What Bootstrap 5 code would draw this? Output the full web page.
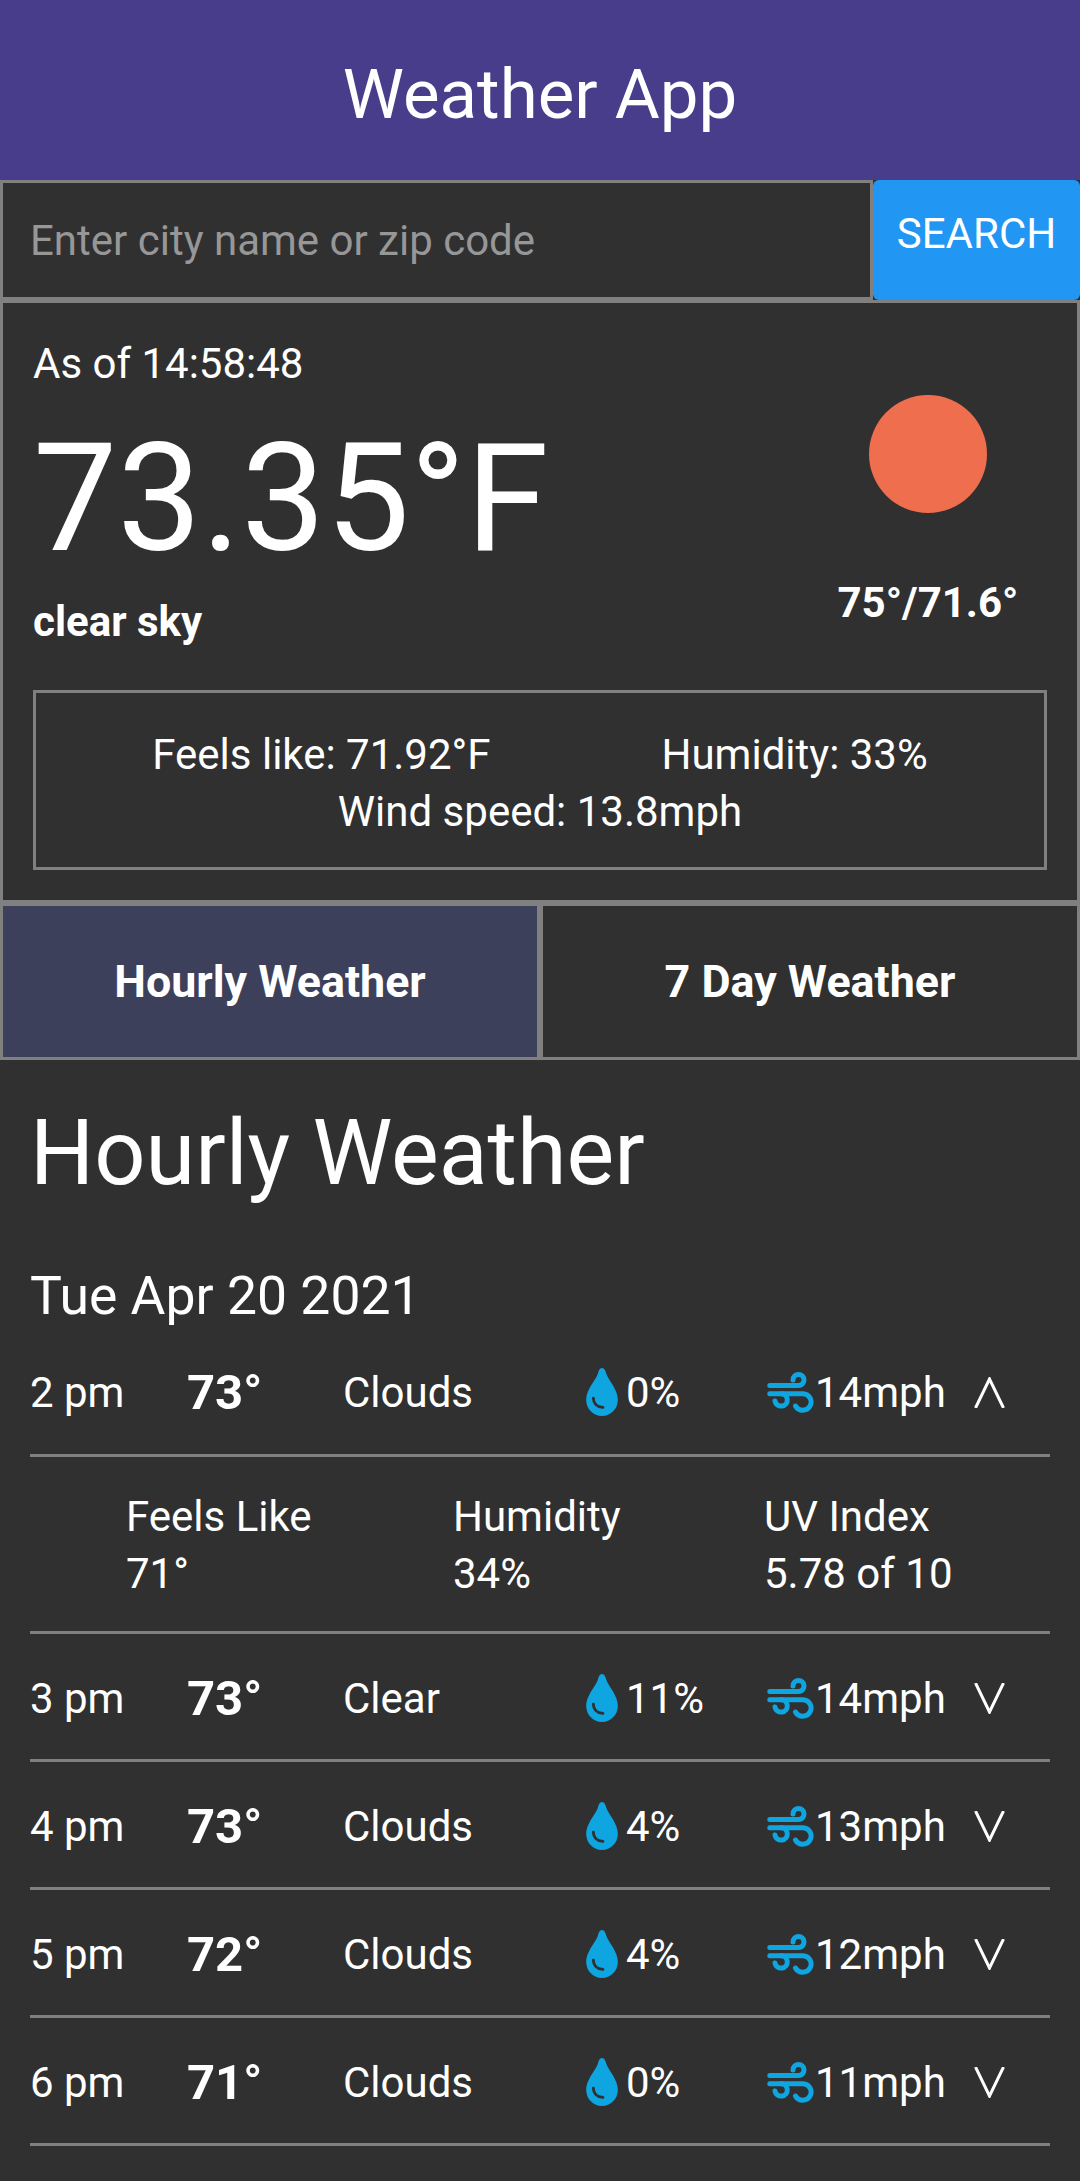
<!DOCTYPE html>
<html lang="en">

<head>
    <meta charset="UTF-8">
    <meta name="viewport" content="width=device-width, initial-scale=1.0">
    <title>Weather App</title>
    <link rel="stylesheet" href="https://cdn.jsdelivr.net/npm/bootstrap@5.3.0/dist/css/bootstrap.min.css">
    <style>
        body {
            background-color: #303030;
            color: #fff;
            font-family: Roboto, "Liberation Sans", sans-serif;
            font-size: 42px;
            line-height: 57px;
            min-height: 2181px;
        }

        .app-header {
            height: 180px;
            padding-top: 10px;
            background-color: #483d8b;
        }

        .app-title {
            font-size: 69px;
            font-weight: 400;
            margin: 0;
        }

        .search-input {
            height: 120px;
            flex: 1;
            min-width: 0;
            padding: 0 27px;
            border: 3px solid #808080;
            border-radius: 0;
            background-color: #303030;
            color: #fff;
            font-size: 42px;
        }

        .search-input::placeholder {
            color: #979797;
            opacity: 1;
        }

        .search-input:focus {
            background-color: #303030;
            color: #fff;
            border-color: #808080;
            box-shadow: none;
        }

        .search-btn {
            width: 207px;
            height: 120px;
            padding: 0 0 13px;
            background-color: #2196f3;
            border: 0;
            border-radius: 6px;
            color: #fff;
            font-size: 42px;
        }

        .now-panel {
            height: 603px;
            padding: 32px 30px 0;
            border: 3px solid #808080;
        }

        .now-temp {
            font-size: 150px;
            line-height: 176px;
            margin-top: 19px;
        }

        .now-sky,
        .now-range {
            font-weight: 700;
        }

        .now-sky {
            margin-top: 6px;
        }

        .now-side {
            width: 200px;
            margin-right: 19px;
        }

        .sun-dot {
            width: 118px;
            height: 118px;
            margin-top: 60px;
            margin-bottom: 61px;
            border-radius: 50%;
            background-color: #ee6e4d;
        }

        .stat-box {
            height: 180px;
            margin-top: 40px;
            padding-top: 5px;
            border: 3px solid #808080;
        }

        .stat-pair {
            column-gap: 171px;
        }

        .tab-row {
            height: 157px;
        }

        .tab-cell {
            width: 50%;
            background-color: #303030;
            border: 3px solid #808080;
            color: #fff;
            font-size: 44.8px;
            font-weight: 700;
            padding: 0;
        }

        .tab-cell.is-on {
            background-color: #3d405b;
        }

        .hourly-wrap {
            padding: 0 30px;
        }

        .hourly-title {
            font-size: 90px;
            font-weight: 400;
            line-height: 100px;
            margin: 44px 0 0;
        }

        .day-label {
            font-size: 53.5px;
            font-weight: 400;
            line-height: 60px;
            margin: 62px 0 0;
        }

        .hour-row {
            display: grid;
            grid-template-columns: 157px 156px 242px 41px 141px 48px 159px 1fr;
            align-items: center;
            height: 128px;
            padding-top: 3px;
            border-bottom: 3px solid #808080;
        }

        .hour-first {
            height: 131px;
            padding-top: 4px;
            padding-bottom: 0;
        }

        .hour-temp {
            font-size: 49px;
            font-weight: 700;
        }

        .hour-detail {
            display: grid;
            grid-template-columns: 327px 311px 1fr;
            align-content: center;
            height: 177px;
            padding-top: 2px;
            padding-left: 96px;
            border-bottom: 3px solid #808080;
        }

        .drop-icon {
            width: 34px;
            height: 48px;
        }

        .wind-icon {
            width: 48px;
            height: 42px;
        }

        .chev-icon {
            width: 31px;
            height: 31px;
        }
    </style>
</head>

<body>
    <svg width="0" height="0" class="d-block">
        <symbol id="drop" viewBox="0 0 33 50">
            <path fill="#0ea5e0" fill-rule="evenodd" d="M16.5 0c2.5 0 3.6 3 4.700 6.500 2 6 11.800 16 11.800 26.500C33 42.500 25.500 50 16.500 50S0 42.500 0 33C0 22.500 10 12.500 12 6.500 13 3 14 0 16.500 0Z" />
            <path fill="none" stroke="#303030" stroke-width="3" stroke-linecap="round" d="M7.500 31.500c0 5 3.500 9 10 9.500" />
        </symbol>
        <symbol id="wind" viewBox="0 0 48 42">
            <g fill="none" stroke="#0ea5e0" stroke-width="5" stroke-linecap="round">
                <path d="M2.800 14.500H31.500a5.500 5.500 0 1 0-5.500-5.500" />
                <path d="M2.800 22.700H36A8.300 8.300 0 1 1 28.500 35" />
                <path d="M14 22.700A6.200 6.200 0 1 1 8 30" />
            </g>
        </symbol>
        <symbol id="chev-up" viewBox="0 0 31 31">
            <path fill="none" stroke="#fff" stroke-width="3" d="M1.500 31 15.500 2 29.500 31" />
        </symbol>
        <symbol id="chev-down" viewBox="0 0 31 31">
            <path fill="none" stroke="#fff" stroke-width="3" d="M1.500 0 15.500 29 29.500 0" />
        </symbol>
    </svg>

    <header class="app-header d-flex align-items-center justify-content-center">
        <h1 class="app-title">Weather App</h1>
    </header>

    <form class="d-flex">
        <input type="text" class="form-control search-input" placeholder="Enter city name or zip code">
        <button type="button" class="btn search-btn">SEARCH</button>
    </form>

    <section class="now-panel">
        <div class="d-flex justify-content-between">
            <div>
                <div>As of 14:58:48</div>
                <div class="now-temp">73.35°F</div>
                <div class="now-sky">clear sky</div>
            </div>
            <div class="now-side d-flex flex-column align-items-center">
                <div class="sun-dot"></div>
                <div class="now-range">75°/71.6°</div>
            </div>
        </div>
        <div class="stat-box d-flex flex-column justify-content-center text-center">
            <div class="stat-pair d-flex justify-content-center">
                <span>Feels like: 71.92°F</span>
                <span>Humidity: 33%</span>
            </div>
            <div>Wind speed: 13.8mph</div>
        </div>
    </section>

    <div class="tab-row d-flex">
        <button type="button" class="tab-cell is-on">Hourly Weather</button>
        <button type="button" class="tab-cell">7 Day Weather</button>
    </div>

    <main class="hourly-wrap">
        <h2 class="hourly-title">Hourly Weather</h2>
        <h3 class="day-label">Tue Apr 20 2021</h3>

        <div class="hour-row hour-first">
            <span>2 pm</span><span class="hour-temp">73°</span><span>Clouds</span>
            <svg class="drop-icon"><use href="#drop" /></svg><span>0%</span>
            <svg class="wind-icon"><use href="#wind" /></svg><span>14mph</span>
            <svg class="chev-icon"><use href="#chev-up" /></svg>
        </div>
        <div class="hour-detail">
            <div>Feels Like<br>71°</div>
            <div>Humidity<br>34%</div>
            <div>UV Index<br>5.78 of 10</div>
        </div>
        <div class="hour-row">
            <span>3 pm</span><span class="hour-temp">73°</span><span>Clear</span>
            <svg class="drop-icon"><use href="#drop" /></svg><span>11%</span>
            <svg class="wind-icon"><use href="#wind" /></svg><span>14mph</span>
            <svg class="chev-icon"><use href="#chev-down" /></svg>
        </div>
        <div class="hour-row">
            <span>4 pm</span><span class="hour-temp">73°</span><span>Clouds</span>
            <svg class="drop-icon"><use href="#drop" /></svg><span>4%</span>
            <svg class="wind-icon"><use href="#wind" /></svg><span>13mph</span>
            <svg class="chev-icon"><use href="#chev-down" /></svg>
        </div>
        <div class="hour-row">
            <span>5 pm</span><span class="hour-temp">72°</span><span>Clouds</span>
            <svg class="drop-icon"><use href="#drop" /></svg><span>4%</span>
            <svg class="wind-icon"><use href="#wind" /></svg><span>12mph</span>
            <svg class="chev-icon"><use href="#chev-down" /></svg>
        </div>
        <div class="hour-row">
            <span>6 pm</span><span class="hour-temp">71°</span><span>Clouds</span>
            <svg class="drop-icon"><use href="#drop" /></svg><span>0%</span>
            <svg class="wind-icon"><use href="#wind" /></svg><span>11mph</span>
            <svg class="chev-icon"><use href="#chev-down" /></svg>
        </div>
    </main>

    <script src="https://cdn.jsdelivr.net/npm/bootstrap@5.3.0/dist/js/bootstrap.bundle.min.js"></script>
</body>
</html>
